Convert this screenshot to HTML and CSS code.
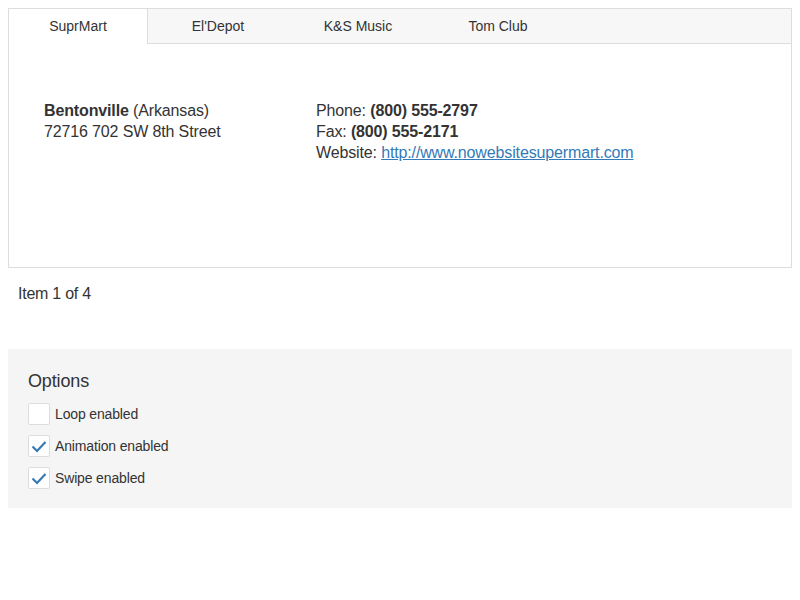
FILE: index.html
```html
<!DOCTYPE html>
<html>
<head>
<meta charset="utf-8">
<link rel="stylesheet" href="styles.css">
</head>
<body>
<div class="tabpanel">
  <div class="tabs">
    <div class="tab active">SuprMart</div>
    <div class="tab">El'Depot</div>
    <div class="tab">K&amp;S Music</div>
    <div class="tab">Tom Club</div>
    <div class="tab-fill"></div>
  </div>
  <div class="content">
    <div class="col addr">
      <div><b>Bentonville</b> (Arkansas)</div>
      <div>72716 702 SW 8th Street</div>
    </div>
    <div class="col contacts">
      <div>Phone: <b>(800) 555-2797</b></div>
      <div>Fax: <b>(800) 555-2171</b></div>
      <div>Website: <a href="#">http://www.nowebsitesupermart.com</a></div>
    </div>
  </div>
</div>
<div class="counter">Item 1 of 4</div>
<div class="options">
  <div class="caption">Options</div>
  <div class="option"><span class="box"></span><span>Loop enabled</span></div>
  <div class="option"><span class="box"><svg width="22" height="22" viewBox="0 0 22 22"><path d="M4.5 11.5 L9 16 L17.5 7" fill="none" stroke="#337ab7" stroke-width="2.2"/></svg></span><span>Animation enabled</span></div>
  <div class="option"><span class="box"><svg width="22" height="22" viewBox="0 0 22 22"><path d="M4.5 11.5 L9 16 L17.5 7" fill="none" stroke="#337ab7" stroke-width="2.2"/></svg></span><span>Swipe enabled</span></div>
</div>
</body>
</html>
```
FILE: styles.css
```css
body {
  margin: 8px;
  font-family: "Liberation Sans", Arial, sans-serif;
  color: #333;
  font-size: 16px;
}
.tabpanel {
  border: 1px solid #ddd;
  height: 258px;
  display: flex;
  flex-direction: column;
}
.tabs {
  display: flex;
  height: 35px;
  background: #f7f7f7;
}
.tab {
  width: 140px;
  box-sizing: border-box;
  text-align: center;
  font-size: 14px;
  line-height: 34px;
  border-bottom: 1px solid #ddd;
}
.tab.active {
  width: 139px;
  background: #fff;
  border-right: 1px solid #ddd;
  border-bottom: none;
}
.tab-fill {
  flex: 1;
  border-bottom: 1px solid #ddd;
}
.content {
  display: flex;
  padding: 56px 35px 0;
  line-height: 21px;
  letter-spacing: -0.14px;
}
.addr {
  width: 272px;
}
.content a {
  color: #337ab7;
}
.counter {
  padding: 16px 10px 0;
  line-height: 20px;
  letter-spacing: -0.25px;
}
.options {
  margin-top: 45px;
  background: #f5f5f5;
  padding: 20px 20px 19px;
  font-size: 14px;
  letter-spacing: -0.15px;
}
.caption {
  font-size: 18px;
  line-height: 24px;
  margin-bottom: 10px;
}
.option {
  display: flex;
  align-items: center;
  gap: 5px;
  height: 22px;
  margin-bottom: 10px;
}
.option:last-child {
  margin-bottom: 0;
}
.box {
  width: 22px;
  height: 22px;
  box-sizing: border-box;
  border: 1px solid #ddd;
  background: #fff;
  border-radius: 2px;
  position: relative;
}
.box svg {
  position: absolute;
  left: -1px;
  top: -1px;
}
```
